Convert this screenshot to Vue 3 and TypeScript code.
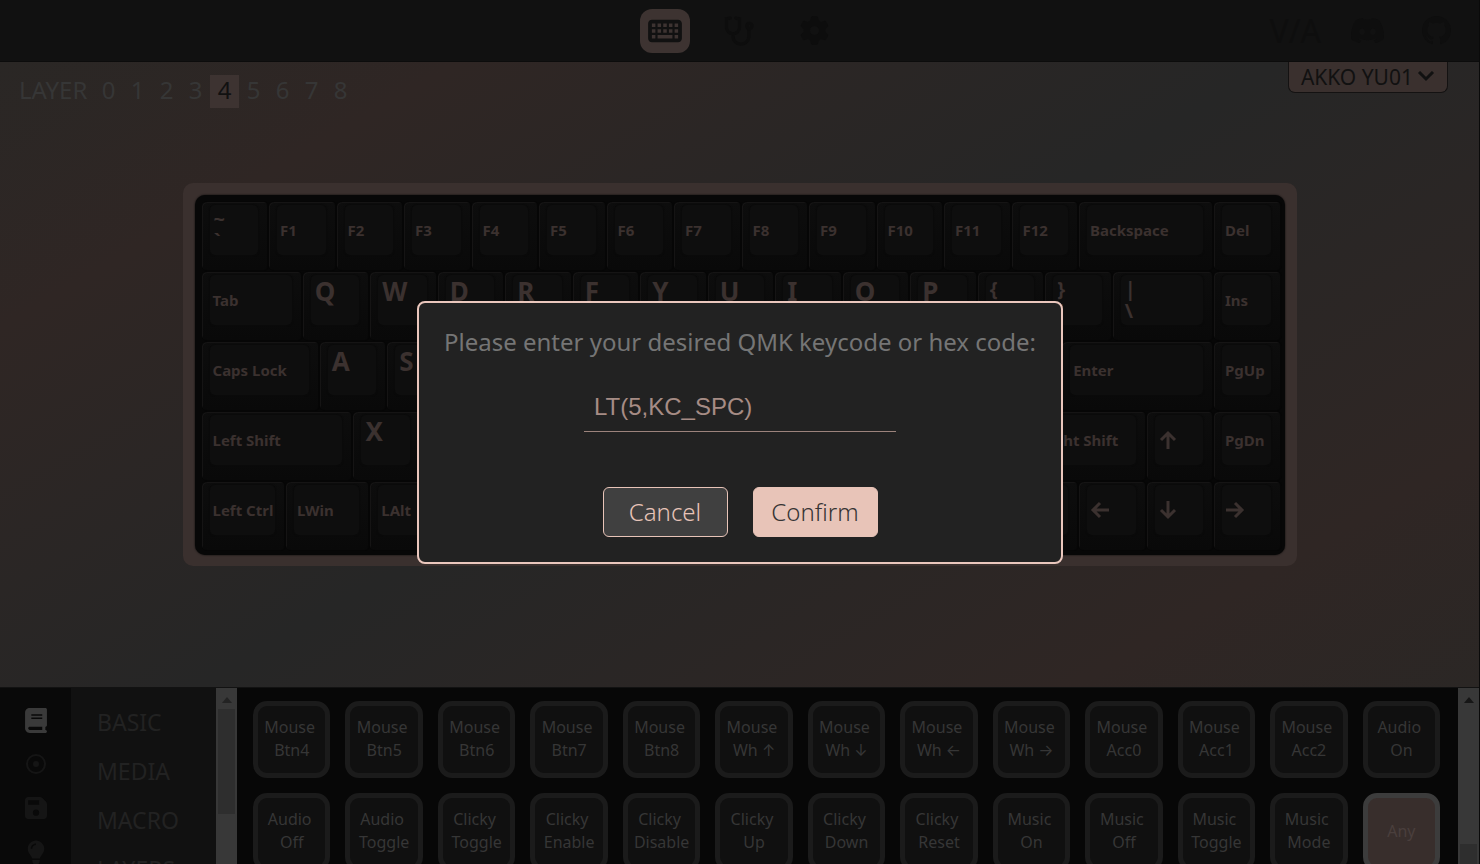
<script setup lang="ts">
import { ref } from 'vue'

interface Key {
  label?: string
  lower?: string
  arrow?: number
  units?: number
}

const layers = [0, 1, 2, 3, 4, 5, 6, 7, 8]
const activeLayer = ref(4)
const code = ref('LT(5,KC_SPC)')
const dialogOpen = ref(true)

const letters = (text: string): Key[] => [...text].map((label) => ({ label }))
const blanks = (count: number): Key[] => Array.from({ length: count }, () => ({}))

const rows: Key[][] = [
  [
    { label: '~', lower: '`' },
    ...Array.from({ length: 12 }, (_, i) => ({ label: `F${i + 1}` })),
    { label: 'Backspace', units: 2 },
    { label: 'Del' },
  ],
  [
    { label: 'Tab', units: 1.5 },
    ...letters('QWDRFYUIOP'),
    { label: '{', lower: '[' },
    { label: '}', lower: ']' },
    { label: '|', lower: '\\', units: 1.5 },
    { label: 'Ins' },
  ],
  [
    { label: 'Caps Lock', units: 1.75 },
    ...letters('AS'),
    ...blanks(9),
    { label: 'Enter', units: 2.25 },
    { label: 'PgUp' },
  ],
  [
    { label: 'Left Shift', units: 2.25 },
    { label: 'X' },
    ...blanks(9),
    { label: 'Right Shift', units: 1.75 },
    { arrow: 0 },
    { label: 'PgDn' },
  ],
  [
    { label: 'Left Ctrl', units: 1.25 },
    { label: 'LWin', units: 1.25 },
    { label: 'LAlt', units: 1.25 },
    { units: 6.25 },
    ...blanks(3),
    { arrow: 270 },
    { arrow: 180 },
    { arrow: 90 },
  ],
]

const categories = ['BASIC', 'MEDIA', 'MACRO', 'LAYERS']

const keycodes = [
  'Mouse Btn4', 'Mouse Btn5', 'Mouse Btn6', 'Mouse Btn7', 'Mouse Btn8', 'Mouse Wh ↑', 'Mouse Wh ↓',
  'Mouse Wh ←', 'Mouse Wh →', 'Mouse Acc0', 'Mouse Acc1', 'Mouse Acc2', 'Audio On',
  'Audio Off', 'Audio Toggle', 'Clicky Toggle', 'Clicky Enable', 'Clicky Disable', 'Clicky Up', 'Clicky Down',
  'Clicky Reset', 'Music On', 'Music Off', 'Music Toggle', 'Music Mode', 'Any',
].map((name) => {
  const [first, second = '', arrow = ''] = name.split(' ')
  return { first, second: arrow ? `${second} ` : second, arrow }
})

const keyClass = (key: Key) => ({
  letter: key.label?.length === 1 && !key.lower,
  pair: !!key.lower,
})
</script>

<template>
  <div class="app">
    <header class="topbar">
      <nav class="tabs">
        <button class="tab active" type="button" aria-label="Configure">
          <svg viewBox="0 0 576 512" width="34" height="30">
            <path fill-rule="evenodd" d="M64 64C29 64 0 93 0 128V384c0 35 29 64 64 64H512c35 0 64-29 64-64V128c0-35-29-64-64-64zM64 128h60v60h-60zM161 128h60v60h-60zM258 128h60v60h-60zM355 128h60v60h-60zM452 128h60v60h-60zM64 226h60v60h-60zM161 226h60v60h-60zM258 226h60v60h-60zM355 226h60v60h-60zM452 226h60v60h-60zM64 324h60v60h-60zM161 324h254v60h-254zM452 324h60v60h-60z" />
          </svg>
        </button>
        <button class="tab" type="button" aria-label="Key tester">
          <svg viewBox="0 0 576 512" width="34" height="30" class="line">
            <path d="M120 36L56 50v142a112 112 0 0 0 224 0V50l-64-14M168 304v40a136 136 0 0 0 272 0V210" />
            <circle cx="448" cy="170" r="44" />
          </svg>
        </button>
        <button class="tab" type="button" aria-label="Settings">
          <svg viewBox="0 0 512 512" width="29" height="29">
            <path d="M495.900 166.600c3.200 8.700 .5 18.400-6.400 24.600l-43.300 39.400c1.100 8.300 1.700 16.800 1.700 25.400s-.6 17.100-1.700 25.400l43.300 39.400c6.900 6.200 9.600 15.900 6.400 24.600c-4.400 11.900-9.700 23.300-15.800 34.300l-4.700 8.100c-6.600 11-14 21.400-22.100 31.200c-5.900 7.200-15.700 9.600-24.500 6.800l-55.700-17.700c-13.400 10.300-28.200 18.900-44 25.400l-12.500 57.100c-2 9.100-9 16.300-18.200 17.800c-13.800 2.300-28 3.500-42.500 3.500s-28.700-1.200-42.500-3.500c-9.200-1.500-16.200-8.700-18.200-17.800l-12.500-57.100c-15.800-6.500-30.600-15.100-44-25.400L83.100 425.900c-8.800 2.800-18.600 .3-24.500-6.800c-8.100-9.800-15.500-20.200-22.100-31.200l-4.700-8.100c-6.100-11-11.400-22.400-15.800-34.300c-3.200-8.700-.5-18.400 6.400-24.600l43.300-39.400C64.600 273.100 64 264.600 64 256s.6-17.100 1.700-25.400L22.400 191.200c-6.900-6.200-9.600-15.900-6.400-24.600c4.400-11.900 9.700-23.300 15.800-34.300l4.700-8.100c6.600-11 14-21.400 22.100-31.200c5.900-7.200 15.700-9.600 24.500-6.800l55.700 17.700c13.400-10.300 28.200-18.900 44-25.400l12.500-57.100c2-9.100 9-16.300 18.200-17.800C227.300 1.200 241.500 0 256 0s28.700 1.200 42.500 3.500c9.200 1.500 16.200 8.700 18.200 17.800l12.500 57.100c15.800 6.500 30.600 15.100 44 25.400l55.700-17.700c8.800-2.800 18.600-.3 24.500 6.800c8.100 9.800 15.500 20.200 22.100 31.200l4.700 8.100c6.100 11 11.400 22.400 15.800 34.300zM256 336a80 80 0 1 0 0-160 80 80 0 1 0 0 160z" />
          </svg>
        </button>
      </nav>
      <div class="links">
        <a href="#via" class="brand">V/A</a>
        <a href="#discord" aria-label="Discord">
          <svg viewBox="0 0 24 24" width="33" height="33">
            <path d="M20.317 4.37a19.800 19.800 0 00-4.885-1.515.074.074 0 00-.079.037c-.21.375-.444.865-.608 1.250-1.845-.276-3.680-.276-5.487 0-.164-.393-.406-.874-.618-1.250a.077.077 0 00-.079-.037 19.740 19.740 0 00-4.885 1.515.07.07 0 00-.032.028C.533 9.046-.319 13.580.099 18.058a.082.082 0 00.031.056c2.053 1.508 4.041 2.423 5.993 3.029a.078.078 0 00.084-.027c.462-.63.873-1.295 1.226-1.994a.076.076 0 00-.042-.106c-.653-.248-1.274-.55-1.872-.892a.077.077 0 01-.008-.128c.126-.094.252-.192.372-.291a.074.074 0 01.078-.011c3.928 1.793 8.180 1.793 12.061 0a.074.074 0 01.079.01c.12.099.246.198.373.292a.077.077 0 01-.007.128 12.300 12.300 0 01-1.873.891.077.077 0 00-.041.107c.36.698.772 1.363 1.225 1.993a.076.076 0 00.084.029c1.961-.607 3.950-1.522 6.002-3.029a.077.077 0 00.031-.055c.5-5.177-.838-9.674-3.549-13.660a.061.061 0 00-.031-.029zM8.020 15.331c-1.183 0-2.157-1.086-2.157-2.419 0-1.333.956-2.419 2.157-2.419 1.211 0 2.176 1.095 2.157 2.419 0 1.333-.956 2.419-2.157 2.419zm7.975 0c-1.183 0-2.157-1.086-2.157-2.419 0-1.333.955-2.419 2.157-2.419 1.211 0 2.176 1.095 2.157 2.419 0 1.333-.946 2.419-2.157 2.419z" />
          </svg>
        </a>
        <a href="#github" aria-label="GitHub">
          <svg viewBox="0 0 16 16" width="29" height="29">
            <path d="M8 0C3.580 0 0 3.580 0 8c0 3.540 2.290 6.530 5.470 7.590.4.070.55-.17.55-.38 0-.19-.01-.82-.01-1.490-2.010.37-2.530-.49-2.690-.94-.09-.23-.48-.94-.82-1.130-.28-.15-.68-.52-.01-.53.630-.01 1.080.58 1.230.82.720 1.210 1.870.87 2.330.66.070-.52.280-.87.510-1.070-1.780-.2-3.640-.89-3.640-3.950 0-.87.310-1.590.820-2.150-.08-.2-.36-1.020.08-2.120 0 0 .67-.21 2.200.82.640-.18 1.320-.27 2-.27s1.360.09 2 .27c1.530-1.040 2.200-.82 2.200-.82.440 1.100.16 1.920.08 2.120.51.560.82 1.270.82 2.150 0 3.070-1.870 3.750-3.650 3.950.29.250.54.730.54 1.480 0 1.070-.01 1.930-.01 2.200 0 .21.15.46.55.38A8 8 0 0 0 16 8c0-4.420-3.580-8-8-8z" />
          </svg>
        </a>
      </div>
    </header>

    <main class="stage">
      <div class="stage-top">
        <div class="layers">
          <span class="layers-title">LAYER</span>
          <button
            v-for="layer in layers"
            :key="layer"
            type="button"
            class="layer"
            :class="{ active: layer === activeLayer }"
            @click="activeLayer = layer"
          >{{ layer }}</button>
        </div>
        <button class="device" type="button">
          AKKO YU01
          <svg viewBox="0 0 18 12" width="18" height="12"><path d="M2 1l7 7 7-7" /></svg>
        </button>
      </div>

      <div class="case">
        <div class="plate">
          <div v-for="(row, r) in rows" :key="r" class="row">
            <button
              v-for="(key, k) in row"
              :key="k"
              type="button"
              class="cap"
              :class="keyClass(key)"
              :style="{ gridColumn: `span ${(key.units ?? 1) * 4}` }"
            >
              <span class="face">
                <span v-if="key.label">{{ key.label }}</span>
                <span v-if="key.lower">{{ key.lower }}</span>
                <svg
                  v-if="key.arrow !== undefined"
                  viewBox="0 0 20 20"
                  width="20"
                  height="20"
                  :style="{ transform: `rotate(${key.arrow}deg)` }"
                ><path d="M10 19V3M3 10l7-7 7 7" /></svg>
              </span>
            </button>
          </div>
        </div>
      </div>
    </main>

    <section class="pane">
      <nav class="rail">
        <button type="button" class="active" aria-label="Keymap">
          <svg viewBox="0 0 448 512" width="22" height="25">
            <path fill-rule="evenodd" d="M96 0C43 0 0 43 0 96V416c0 53 43 96 96 96H416c18 0 32-14 32-32s-14-32-32-32V384c18 0 32-14 32-32V32c0-18-14-32-32-32zM96 384H352v64H96c-18 0-32-14-32-32s14-32 32-32zM128 128H352v32H128zM128 192H352v32H128z" />
          </svg>
        </button>
        <button type="button" aria-label="Macros">
          <svg viewBox="0 0 22 22" width="22" height="22">
            <circle cx="11" cy="11" r="9" fill="none" stroke="currentColor" stroke-width="2" />
            <circle cx="11" cy="11" r="3" />
          </svg>
        </button>
        <button type="button" aria-label="Save and load">
          <svg viewBox="0 0 448 448" width="22" height="22">
            <path fill-rule="evenodd" d="M64 0C29 0 0 29 0 64V384c0 35 29 64 64 64H384c35 0 64-29 64-64V141c0-17-7-33-19-45L352 19C340 7 324 0 307 0zM64 64H288V160H64zM224 256a64 64 0 1 1 0 128 64 64 0 1 1 0-128z" />
          </svg>
        </button>
        <button type="button" aria-label="Lighting">
          <svg viewBox="0 0 384 512" width="18" height="25">
            <path fill-rule="evenodd" d="M272 384c9.600-31.900 29.500-59.100 49.200-86.200C345 264 368 226 368 176 368 78.800 289.200 0 192 0S16 78.800 16 176c0 50 23 88 46.800 121.800C82.500 324.900 102.400 352.100 112 384zM112 416v16a80 80 0 0 0 160 0v-16zM112 176c0-44 36-80 80-80v-32c-62 0-112 50-112 112z" />
          </svg>
        </button>
      </nav>

      <nav class="menu">
        <button v-for="name in categories" :key="name" type="button">{{ name }}</button>
      </nav>
      <div class="scroll first" aria-hidden="true">
        <svg viewBox="0 0 10 6" width="10" height="6"><path d="M0 6l5-6 5 6z" /></svg>
        <i></i>
      </div>

      <div class="codes">
        <button
          v-for="item in keycodes"
          :key="item.first + item.second + item.arrow"
          type="button"
          class="code"
          :class="{ any: !item.second }"
        >
          <span v-if="item.second">{{ item.first + ' ' }}</span>
          <span v-else>{{ item.first }}</span>
          <span v-if="item.second">{{ item.second }}<span v-if="item.arrow" class="arrow">{{ item.arrow }}</span></span>
        </button>
      </div>
      <div class="scroll second" aria-hidden="true">
        <svg viewBox="0 0 10 6" width="10" height="6"><path d="M0 6l5-6 5 6z" /></svg>
        <i></i>
      </div>
    </section>

    <div v-if="dialogOpen" class="overlay">
      <form class="dialog" role="dialog" aria-modal="true" @submit.prevent="dialogOpen = false">
        <label for="keycode">Please enter your desired QMK keycode or hex code:</label>
        <input id="keycode" v-model="code" type="text" autocomplete="off" spellcheck="false" />
        <div class="actions">
          <button type="button" class="cancel" @click="dialogOpen = false">Cancel</button>
          <button type="submit" class="confirm">Confirm</button>
        </div>
      </form>
    </div>
  </div>
</template>

<style>
body {
  margin: 0;
  background: #0a0a0a;
}
</style>

<style scoped>
.app {
  box-sizing: border-box;
  height: 100vh;
  display: flex;
  flex-direction: column;
  overflow: hidden;
  border-right: 1px solid #0a0a0a;
  font-family: "Noto Sans", sans-serif;
}

.app *,
.app *::before {
  box-sizing: border-box;
}

button {
  margin: 0;
  padding: 0;
  border: 0;
  background: none;
  color: inherit;
  font: inherit;
}

svg {
  display: block;
  fill: currentColor;
}

.topbar {
  height: 62px;
  flex: none;
  display: grid;
  grid-template-columns: 1fr auto 1fr;
  align-items: center;
  background: #111;
  border-bottom: 1px solid #0c0c0c;
  color: #0d0d0d;
}

.tabs {
  grid-column: 2;
  display: flex;
  gap: 25px;
}

.tab {
  width: 50px;
  height: 44px;
  display: grid;
  place-items: center;
  border-radius: 12px;
}

.tab.active {
  background: #3d3331;
  color: #111;
}

.line {
  fill: none;
  stroke: currentColor;
  stroke-width: 56;
  stroke-linecap: round;
}

.links {
  display: flex;
  justify-content: flex-end;
  align-items: center;
  gap: 38px;
  padding-right: 28px;
}

.links a {
  color: #0e0e0e;
  text-decoration: none;
}

.links .brand {
  margin-right: -8px;
  font-size: 32px;
  line-height: 40px;
}

.stage {
  flex: 1;
  min-height: 0;
  display: grid;
  background: linear-gradient(150deg, #2a2725 0%, #2f2624 18%, #262626 50%, #2f2624 84%, #2b2725 100%);
}

.stage-top,
.case {
  grid-area: 1 / 1;
}

.stage-top {
  align-self: start;
  display: flex;
  justify-content: space-between;
  align-items: flex-start;
  padding: 0 31px 0 19px;
}

.layers {
  display: flex;
  align-items: center;
  padding-top: 13px;
  color: #363636;
  font-size: 24px;
  line-height: 30px;
}

.layers-title {
  width: 75px;
  height: 33px;
}

.layer {
  width: 29px;
  height: 33px;
  padding-bottom: 3px;
}

.layer.active {
  background: #3d3331;
  color: #111;
}

.device {
  height: 31px;
  display: flex;
  align-items: center;
  gap: 4px;
  padding: 0 12px;
  border: 1px solid #141212;
  border-top: 0;
  border-radius: 0 0 7px 7px;
  background: #3a302e;
  color: #111;
  font-size: 21px;
  line-height: 30px;
}

.device svg,
.face svg {
  fill: none;
  stroke: currentColor;
  stroke-width: 3;
}

.case {
  place-self: center;
  padding: 12px 12px 11px;
  border-radius: 10px;
  background: #3a302e;
}

.plate {
  width: 1090px;
  padding: 6px 3px 4px 7px;
  border-radius: 10px;
  background: #070707;
  box-shadow: 0 0 2px #070707;
}

.row {
  display: grid;
  grid-template-columns: repeat(64, 1fr);
}

.cap {
  height: 70px;
  padding: 3px 9px 15px 8px;
  border: solid #060606;
  border-width: 1px 2px 1px 0;
  border-radius: 5px;
  background: linear-gradient(#0d0d0d, #090909);
  box-shadow: inset 1px 1px 0 #151414;
  color: #3b312f;
  text-align: left;
}

.face {
  height: 100%;
  display: flex;
  flex-direction: column;
  justify-content: center;
  padding-left: 3px;
  border-radius: 5px;
  background: #0e0e0e;
  box-shadow: 0 0 1px 1px #0a0a0a;
  font-size: 15px;
  font-weight: 700;
  line-height: 20px;
  white-space: nowrap;
}

.letter .face {
  justify-content: flex-start;
  padding-left: 4px;
  font-size: 26px;
  line-height: 32px;
}

.pair .face {
  padding-left: 4px;
  font-size: 20px;
  line-height: 22px;
}

.pane {
  height: 177px;
  flex: none;
  display: flex;
  border-top: 1px solid #121212;
  background: #070707;
}

.rail {
  width: 71px;
  display: flex;
  flex-direction: column;
  padding-top: 10px;
  background: #090909;
  color: #151515;
}

.rail button {
  height: 44px;
  flex: none;
  display: grid;
  place-items: center;
}

.rail .active {
  color: #3a3a3a;
}

.menu {
  width: 145px;
  display: flex;
  flex-direction: column;
  align-items: flex-start;
  gap: 16px;
  padding: 18px 0 0 26px;
  background: #111;
  color: #222;
  font-size: 23px;
  line-height: 33px;
}

.scroll {
  width: 21px;
  flex: none;
  padding: 9px 2px 0;
  background: #383838;
  color: #232323;
}

.scroll svg {
  margin: 0 auto 6px;
}

.scroll i {
  display: block;
  height: 105px;
  background: #2e2e2e;
}

.second {
  color: #161616;
}

.second i {
  margin-top: 141px;
}

.codes {
  flex: 1;
  display: grid;
  grid-template-columns: repeat(13, 1fr);
  align-content: start;
  gap: 15px;
  padding: 13px 18px 0 16px;
}

.code {
  aspect-ratio: 1;
  display: flex;
  flex-direction: column;
  align-items: center;
  justify-content: center;
  padding-bottom: 2px;
  border: 5px solid #1b1b1b;
  border-radius: 14px;
  background: #101010;
  color: #363636;
  font-size: 16px;
  line-height: 23px;
  white-space: pre;
}

.arrow {
  font-family: "Inter", sans-serif;
  line-height: 20px;
}

.any {
  border-color: #3c3c3c;
  background: #382e2c;
  color: #4a3f3d;
}

.overlay {
  position: fixed;
  inset: 0;
  display: grid;
  place-items: center;
}

.dialog {
  width: 646px;
  max-width: 100%;
  display: flex;
  flex-direction: column;
  align-items: center;
  padding: 22px 24px 25px;
  border: 2px solid #eac7bd;
  border-radius: 8px;
  background: #222;
}

.dialog label {
  color: #757575;
  font-size: 24px;
  line-height: 34px;
  white-space: nowrap;
}

.dialog input {
  width: 312px;
  height: 50px;
  margin: 23px 0 55px;
  padding: 2px 10px 0;
  border: 0;
  border-bottom: 1px solid #9c837c;
  outline: 0;
  background: none;
  color: #a68c85;
  font-family: "Liberation Sans", sans-serif;
  font-size: 24px;
}

.actions {
  display: flex;
  gap: 25px;
}

.actions button {
  width: 125px;
  height: 50px;
  border: 1px solid #e8c4b8;
  border-radius: 6px;
  font-size: 24px;
  font-weight: 300;
  line-height: 34px;
}

.cancel {
  background: #404040;
  color: #e8c4b8;
}

.confirm {
  background: #e8c4b8;
  color: #363434;
}
</style>
